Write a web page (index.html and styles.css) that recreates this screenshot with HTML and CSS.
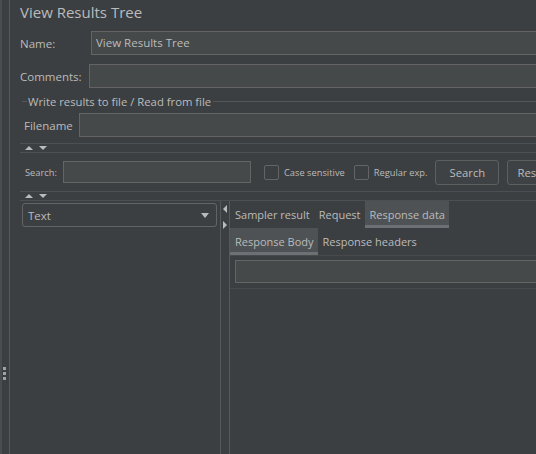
FILE: index.html
```html
<!DOCTYPE html>
<html>
<head>
<meta charset="utf-8">
<link rel="stylesheet" href="styles.css">
</head>
<body>
<div class="app">
  <div class="gutter">
    <div class="grip"><i></i><i></i><i></i></div>
  </div>
  <div class="main">
    <div class="title">View Results Tree</div>
    <div class="row row-name">
      <span class="lbl lbl-name">Name:</span>
      <div class="field">View Results Tree</div>
    </div>
    <div class="row row-comments">
      <span class="lbl lbl-comments">Comments:</span>
      <div class="field"></div>
    </div>
    <div class="group">
      <div class="legend"><span class="legend-lead"></span><span class="legend-text">Write results to file / Read from file</span><span class="legend-rule"></span></div>
      <div class="row row-file">
        <span class="lbl lbl-file">Filename</span>
        <div class="field"></div>
      </div>
    </div>
    <div class="splitter splitter1">
      <span class="tri up"></span><span class="tri down"></span>
    </div>
    <div class="search-row">
      <span class="small lbl-search">Search:</span>
      <div class="field search-field"></div>
      <span class="check"></span><span class="small">Case sensitive</span>
      <span class="check check2"></span><span class="small">Regular exp.</span>
      <span class="btn">Search</span>
      <span class="btn btn-cut">Reset</span>
    </div>
    <div class="splitter">
      <span class="tri up"></span><span class="tri down"></span>
    </div>
    <div class="bottom">
      <div class="left-pane">
        <div class="combo"><span>Text</span><span class="combo-arrow"></span></div>
      </div>
      <div class="divider">
        <span class="tri left"></span><span class="tri right"></span>
      </div>
      <div class="right-pane">
        <div class="tabs">
          <span class="tab">Sampler result</span>
          <span class="tab">Request</span>
          <span class="tab active">Response data</span>
        </div>
        <div class="tabs tabs2">
          <span class="tab active">Response Body</span>
          <span class="tab">Response headers</span>
        </div>
        <div class="body-panel">
          <div class="field body-field"></div>
        </div>
      </div>
    </div>
  </div>
</div>
</body>
</html>
```
FILE: styles.css
```css
* { box-sizing: border-box; }
html, body { margin: 0; padding: 0; }
body {
  width: 536px; height: 454px; overflow: hidden;
  background: #3c3f41;
  color: #bbbbbb;
  font-family: "Open Sans", "Noto Sans", sans-serif;
  font-size: 11.5px;
}
.app { display: flex; height: 454px; }
.gutter {
  width: 10px; flex: none;
  border-left: 2px solid #4a4d50;
  border-right: 1px solid #56595b;
  padding-top: 367px;
}
.grip { display: flex; flex-direction: column; gap: 2px; padding-left: 1px; }
.grip i { display: block; width: 3px; height: 3px; background: #a0a3a6; }
.main { flex: 1; display: flex; flex-direction: column; padding-left: 10px; min-width: 0; }
.title { font-size: 15px; height: 24px; line-height: 24px; white-space: nowrap; flex: none; }
.row { display: flex; align-items: center; white-space: nowrap; flex: none; }
.row > * { flex: none; }
.row > .field { flex: 1 1 auto; }
.field {
  height: 24px; border: 1px solid #646464; background: #45494a;
  line-height: 22px; padding-left: 4px; margin-right: -10px;
}
.row-name { margin-top: 7px; }
.lbl-name { width: 71px; }
.row-comments { margin-top: 9px; }
.lbl-comments { width: 69px; }
.group { margin-top: 6px; flex: none; }
.legend { display: flex; align-items: center; height: 14px; white-space: nowrap; }
.legend-lead { width: 5px; border-top: 1px solid #555759; margin-left: 2px; flex: none; }
.legend-text { padding: 0 2px 0 1px; flex: none; font-size: 11.3px; }
.legend-rule { flex: 1; border-top: 1px solid #555759; }
.row-file { margin-top: 5px; padding-left: 4px; }
.lbl-file { width: 55px; }
.splitter {
  height: 10px; border-top: 1px solid #4d5052; border-bottom: 1px solid #4d5052; flex: none;
  display: flex; align-items: center; gap: 6px; padding-left: 5px;
}
.splitter1 { margin-top: 6px; }
.tri { display: block; width: 0; height: 0; flex: none; }
.tri.up { border-left: 4px solid transparent; border-right: 4px solid transparent; border-bottom: 4px solid #b9bcbf; }
.tri.down { border-left: 4px solid transparent; border-right: 4px solid transparent; border-top: 4px solid #b9bcbf; }
.search-row {
  display: flex; align-items: center; height: 38px; white-space: nowrap; padding-left: 5px; flex: none;
}
.search-row > * { flex: none; }
.small { font-size: 9.3px; }
.lbl-search { width: 38px; }
.search-field { width: 188px; height: 22px; margin-right: 13px; }
.check { width: 15px; height: 15px; border: 1px solid #646464; border-radius: 2px; margin-right: 5px; }
.check2 { margin-left: 9px; }
.btn {
  margin-left: 8px; height: 25px; width: 64px; border: 1px solid #5e6060; border-radius: 3px;
  display: flex; align-items: center; justify-content: center; font-size: 11.3px; background: #3f4244;
}
.btn-cut { margin-left: 8px; width: 60px; justify-content: flex-start; padding-left: 9px; }
.bottom { flex: 1; display: flex; min-height: 0; }
.left-pane { width: 200px; flex: none; padding: 2px 3px 0 2px; }
.combo {
  height: 24px; border: 1px solid #646464; border-radius: 3px;
  display: flex; align-items: center; justify-content: space-between; padding: 0 7px 0 5px;
  font-size: 11.5px;
}
.combo-arrow { width: 0; height: 0; border-left: 4px solid transparent; border-right: 4px solid transparent; border-top: 5px solid #b9bcbf; }
.divider {
  width: 10px; flex: none; border-left: 1px solid #56595b; border-right: 1px solid #56595b;
  display: flex; flex-direction: column; align-items: center; padding-top: 4px; gap: 8px;
}
.tri.left { border-top: 4px solid transparent; border-bottom: 4px solid transparent; border-right: 4px solid #b9bcbf; }
.tri.right { border-top: 4px solid transparent; border-bottom: 4px solid transparent; border-left: 4px solid #b9bcbf; }
.right-pane { flex: 1; display: flex; flex-direction: column; min-width: 0; }
.tabs { display: flex; height: 27px; white-space: nowrap; font-size: 11px; flex: none; }
.tab { padding: 2px 4px 0 5px; display: flex; align-items: center; border-bottom: 3px solid transparent; flex: none; }
.tab.active { background: #4e5254; border-bottom-color: #6c7176; }
.body-panel { padding: 4px 0 0 5px; height: 34px; border-top: 1px solid #47494b; border-bottom: 1px solid #47494b; flex: none; }
.body-field { height: 23px; }
```
